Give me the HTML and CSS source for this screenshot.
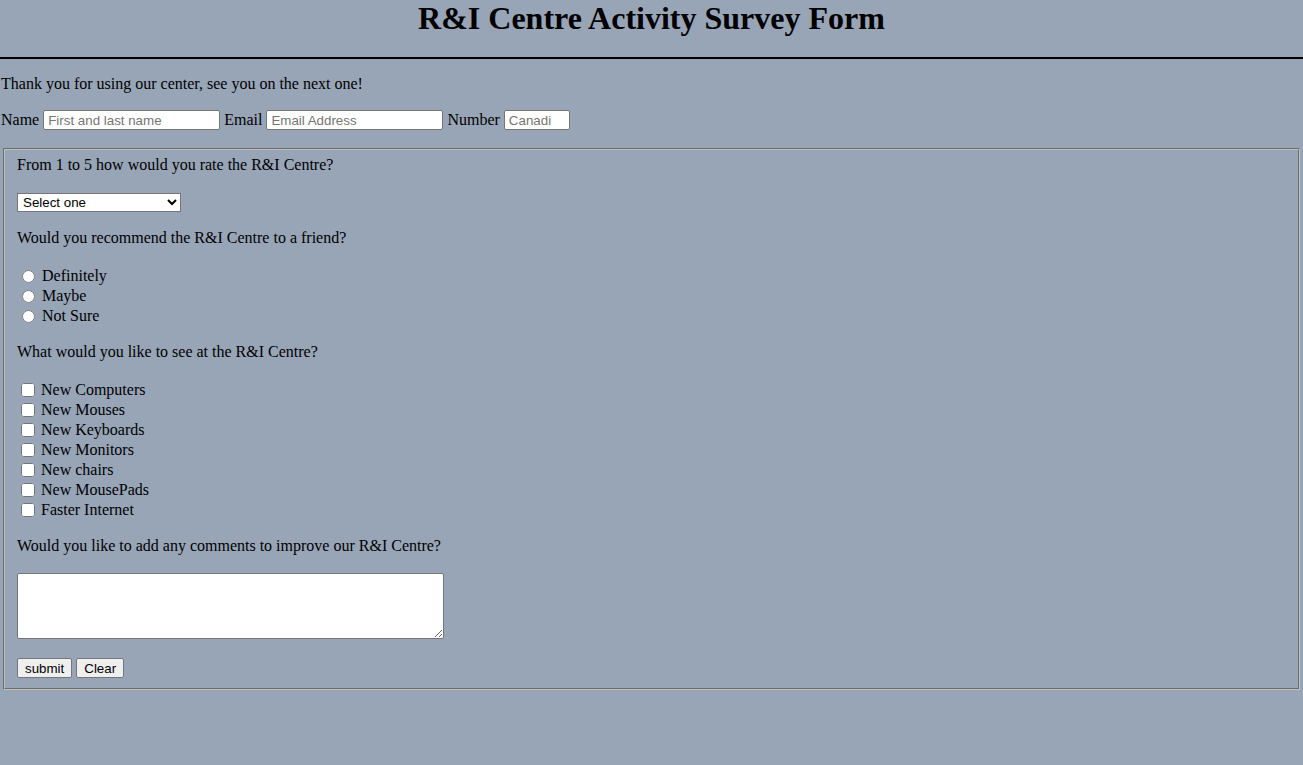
FILE: index.html
```html
<!DOCTYPE html>
<html lang="en">
<head>
<meta charset="utf-8">
<title>R&amp;I Centre Activity Survey Form</title>
<link rel="stylesheet" href="styles.css">
</head>
<body>
<header class="page-header">
  <h1 class="title">R&amp;I Centre Activity Survey Form</h1>
  <div class="rule"></div>
</header>
<p class="intro">Thank you for using our center, see you on the next one!</p>
<form class="survey">
  <div class="contact">
    <label class="contact-label" for="name">Name</label>
    <input class="field field-name" id="name" type="text" placeholder="First and last name">
    <label class="contact-label" for="email">Email</label>
    <input class="field field-email" id="email" type="email" placeholder="Email Address">
    <label class="contact-label" for="number">Number</label>
    <input class="field field-number" id="number" type="number" placeholder="Canadi">
  </div>
  <fieldset class="box">
    <div class="question q-first">From 1 to 5 how would you rate the R&amp;I Centre?</div>
    <select class="rating">
      <option>Select one</option>
      <option>1</option>
      <option>2</option>
      <option>3</option>
      <option>4</option>
      <option>5</option>
    </select>
    <div class="question">Would you recommend the R&amp;I Centre to a friend?</div>
    <div class="options">
      <label class="opt"><input class="radio" type="radio" name="rec"><span>Definitely</span></label>
      <label class="opt"><input class="radio" type="radio" name="rec"><span>Maybe</span></label>
      <label class="opt"><input class="radio" type="radio" name="rec"><span>Not Sure</span></label>
    </div>
    <div class="question">What would you like to see at the R&amp;I Centre?</div>
    <div class="options">
      <label class="opt"><input class="check" type="checkbox"><span>New Computers</span></label>
      <label class="opt"><input class="check" type="checkbox"><span>New Mouses</span></label>
      <label class="opt"><input class="check" type="checkbox"><span>New Keyboards</span></label>
      <label class="opt"><input class="check" type="checkbox"><span>New Monitors</span></label>
      <label class="opt"><input class="check" type="checkbox"><span>New chairs</span></label>
      <label class="opt"><input class="check" type="checkbox"><span>New MousePads</span></label>
      <label class="opt"><input class="check" type="checkbox"><span>Faster Internet</span></label>
    </div>
    <div class="question">Would you like to add any comments to improve our R&amp;I Centre?</div>
    <textarea class="comments"></textarea>
    <div class="actions">
      <button class="btn" type="submit">submit</button>
      <button class="btn" type="reset">Clear</button>
    </div>
  </fieldset>
</form>
</body>
</html>
```

FILE: styles.css
```css
html {
  background: #98a5b7;
}
body {
  margin: 0;
  background: #98a5b7;
  color: #000;
  font-family: "Liberation Serif", "Times New Roman", serif;
  font-size: 16px;
  line-height: 18px;
}
.page-header {
  display: flex;
  flex-direction: column;
}
.title {
  margin: 0;
  height: 37px;
  line-height: 37px;
  font-size: 32px;
  font-weight: bold;
  text-align: center;
}
.rule {
  margin-top: 20px;
  height: 2px;
  background: #000;
}
.intro {
  margin: 16px 0 0 0;
  padding-left: 1px;
  height: 18px;
}
.survey {
  display: flex;
  flex-direction: column;
}
.contact {
  display: flex;
  align-items: center;
  gap: 4px;
  margin-top: 17px;
  padding-left: 1px;
  height: 20px;
}
.field {
  box-sizing: border-box;
  height: 20px;
  margin: 0;
  padding: 1px 4px;
  border: 1px solid #767676;
  border-radius: 2px;
  background: #fff;
  font-family: "Liberation Sans", Arial, sans-serif;
  font-size: 13.33px;
}
.field::placeholder {
  color: #757575;
}
.field-name,
.field-email {
  width: 177px;
}
.field-number {
  width: 66px;
  -moz-appearance: textfield;
}
.field-number::-webkit-inner-spin-button,
.field-number::-webkit-outer-spin-button {
  -webkit-appearance: none;
  margin: 0;
}
.box {
  margin: 18px 3px 0 3px;
  padding: 6px 12px 10px 12px;
  border: 2px groove #c0c0c0;
  display: flex;
  flex-direction: column;
  align-items: flex-start;
  min-width: 0;
}
.question {
  height: 18px;
  margin-top: 17px;
}
.q-first {
  margin-top: 0;
}
.rating {
  box-sizing: border-box;
  margin-top: 19px;
  width: 164px;
  height: 19px;
  padding: 0 0 0 1px;
  font-family: "Liberation Sans", Arial, sans-serif;
  font-size: 13.33px;
  border: 1px solid #767676;
  border-radius: 0;
  background: #fff;
  color: #000;
}
.options {
  margin-top: 19px;
  display: flex;
  flex-direction: column;
}
.opt {
  display: flex;
  align-items: center;
  height: 20px;
}
.radio {
  margin: 0 3px 0 5px;
  width: 13px;
  height: 13px;
}
.check {
  margin: 0 3px 0 4px;
  width: 14px;
  height: 14px;
}
.opt span {
  padding-left: 4px;
}
.check + span {
  padding-left: 3px;
}
.comments {
  box-sizing: border-box;
  margin-top: 18px;
  width: 427px;
  height: 66px;
  border: 1px solid #767676;
  border-radius: 2px;
  background: #fff;
  resize: both;
}
.actions {
  margin-top: 19px;
  display: flex;
  gap: 4px;
  height: 20px;
}
.btn {
  box-sizing: border-box;
  height: 20px;
  margin: 0;
  padding: 1px 7px;
  font-family: "Liberation Sans", Arial, sans-serif;
  font-size: 13.33px;
  color: #000;
  background: #efefef;
  border: 1px solid #767676;
  border-radius: 2px;
}
```
